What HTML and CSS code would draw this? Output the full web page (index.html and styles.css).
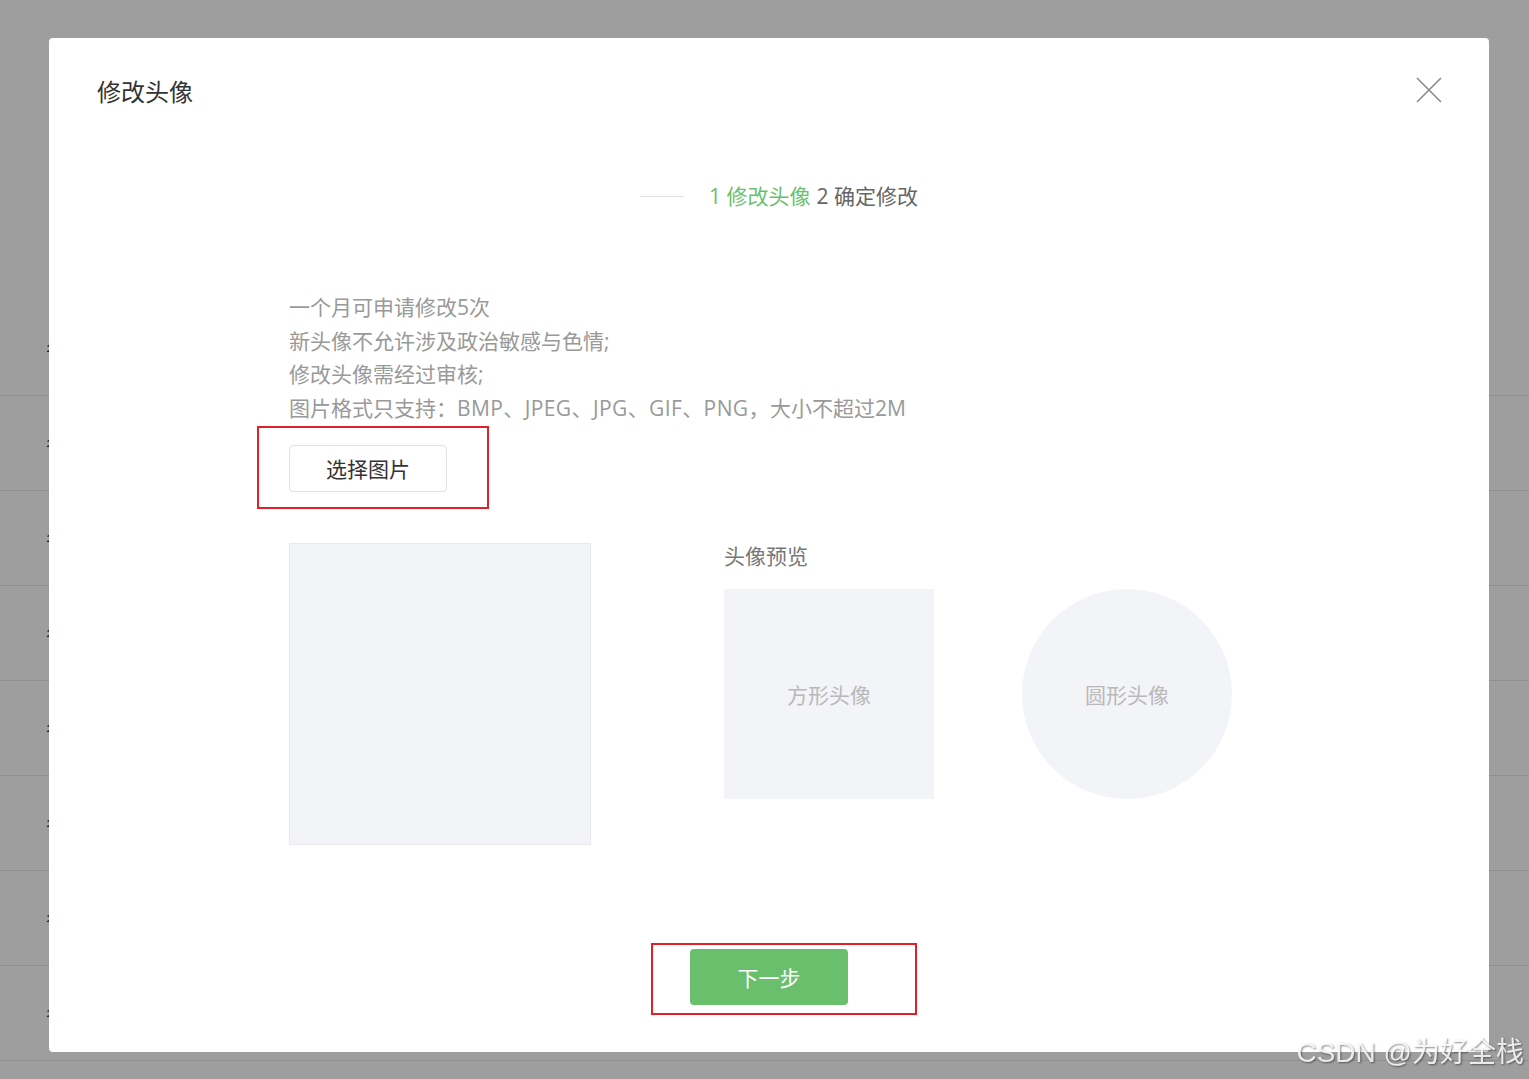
FILE: index.html
```html
<!DOCTYPE html>
<html lang="zh-CN">
<head>
  <meta charset="UTF-8" />
  <title>修改头像</title>
  <link rel="stylesheet" href="styles.css">
</head>
<body>

  <div class="page">
    <div class="page-head"></div>
    <div class="row"><span>名称</span></div>
    <div class="row"><span>名称</span></div>
    <div class="row"><span>名称</span></div>
    <div class="row"><span>名称</span></div>
    <div class="row"><span>名称</span></div>
    <div class="row"><span>名称</span></div>
    <div class="row"><span>名称</span></div>
    <div class="row"><span>名称</span></div>
  </div>

  <div class="mask"></div>

  <div class="modal">
    <div class="modal-head">
      <h2>修改头像</h2>
      <svg class="close" width="26" height="26" viewBox="0 0 26 26">
        <path d="M1 1 L25 25 M25 1 L1 25" stroke="#8a8a8a" stroke-width="1.6" fill="none"/>
      </svg>
    </div>

    <div class="steps">
      <span class="steps-line"></span>
      <span class="step on">1 修改头像</span>
      <span class="step">2 确定修改</span>
    </div>

    <div class="content">
      <ul class="tips">
        <li>一个月可申请修改5次</li>
        <li>新头像不允许涉及政治敏感与色情;</li>
        <li>修改头像需经过审核;</li>
        <li>图片格式只支持：<span class="latin">BMP、JPEG、JPG、GIF、PNG，</span>大小不超过2M</li>
      </ul>

      <div class="pick">
        <button class="btn">选择图片</button>
        <span class="mark mark-pick"></span>
      </div>

      <div class="work">
        <div class="crop"></div>
        <div class="preview">
          <p class="preview-title">头像预览</p>
          <div class="preview-list">
            <div class="avatar square">方形头像</div>
            <div class="avatar round">圆形头像</div>
          </div>
        </div>
      </div>
    </div>

    <div class="foot">
      <div class="next-wrap">
        <button class="btn-next">下一步</button>
        <span class="mark mark-next"></span>
      </div>
    </div>
  </div>

  <div class="watermark">CSDN @为好全栈</div>

</body>
</html>
```

FILE: styles.css
```css
* { box-sizing: border-box; }
body {
  margin: 0;
  font-family: "Open Sans", "Noto Sans CJK SC", sans-serif;
  background: #fff;
  height: 1079px;
  overflow: hidden;
}

/* page behind the dialog */
.page-head { height: 301px; }
.row {
  height: 95px;
  border-bottom: 1px solid #e6e6e6;
  display: flex;
  align-items: center;
  padding-left: 46px;
  font-size: 16px;
  color: #222;
}

.mask {
  position: fixed;
  inset: 0;
  background: rgba(0,0,0,0.38);
}

.modal {
  position: fixed;
  left: 49px;
  top: 38px;
  width: 1440px;
  height: 1014px;
  background: #fff;
  border-radius: 4px;
  padding: 36px 48px 0 48px;
  display: flex;
  flex-direction: column;
}
.modal-head {
  display: flex;
  justify-content: space-between;
  align-items: flex-start;
}
.modal-head h2 {
  margin: 0;
  font-size: 24px;
  line-height: 36px;
  font-weight: normal;
  color: #333;
}
.close { margin-top: 3px; margin-right: -1px; }

.steps {
  margin-top: 71px;
  display: flex;
  align-items: center;
  padding-left: 543px;
  font-size: 21px;
  line-height: 30px;
  color: #666;
}
.steps-line {
  width: 44px;
  height: 1px;
  background: #e2e2e2;
  margin-right: 25px;
}
.step { margin-right: 6px; }
.step.on { color: #6abf6c; }

.content { padding-left: 192px; }
.tips {
  list-style: none;
  margin: 80px 0 0;
  padding: 0;
  font-size: 21px;
  line-height: 33.7px;
  color: #999;
}
.latin { letter-spacing: 0.4px; }

.pick {
  position: relative;
  margin-top: 19px;
  width: 158px;
}
.btn {
  width: 158px;
  height: 47px;
  border: 1px solid #e2e2e2;
  border-radius: 4px;
  background: #fff;
  font-family: inherit;
  font-size: 21px;
  color: #333;
  padding: 0;
}

.mark {
  position: absolute;
  border: 2px solid #e3202a;
  pointer-events: none;
}
.mark-pick { left: -32px; top: -19px; width: 232px; height: 83px; }

.work {
  margin-top: 51px;
  display: flex;
  align-items: flex-start;
}
.crop {
  width: 302px;
  height: 302px;
  background: #f3f4f8;
  border: 1px solid #e9e9ec;
}
.preview { margin-left: 133px; }
.preview-title {
  margin: -1px 0 0;
  font-size: 21px;
  line-height: 28px;
  color: #777;
}
.preview-list {
  margin-top: 19px;
  display: flex;
  gap: 88px;
}
.avatar {
  width: 210px;
  height: 210px;
  background: #f3f4f8;
  display: flex;
  align-items: center;
  justify-content: center;
  font-size: 21px;
  color: #b9b9b9;
}
.round { border-radius: 50%; }

.foot {
  margin-top: 104px;
  display: flex;
  justify-content: center;
}
.next-wrap { position: relative; }
.btn-next {
  width: 158px;
  height: 56px;
  border: none;
  border-radius: 4px;
  background: #6abf6c;
  color: #fff;
  font-family: inherit;
  font-size: 21px;
  padding: 0;
}
.mark-next { left: -39px; top: -6px; width: 266px; height: 72px; }

.watermark {
  position: fixed;
  right: 5px;
  bottom: 10px;
  font-family: "Liberation Sans", "Noto Sans CJK SC", sans-serif;
  font-size: 28px;
  line-height: 32px;
  color: rgba(255,255,255,0.85);
  text-shadow: 1px 1px 2px rgba(0,0,0,0.45);
}
```
